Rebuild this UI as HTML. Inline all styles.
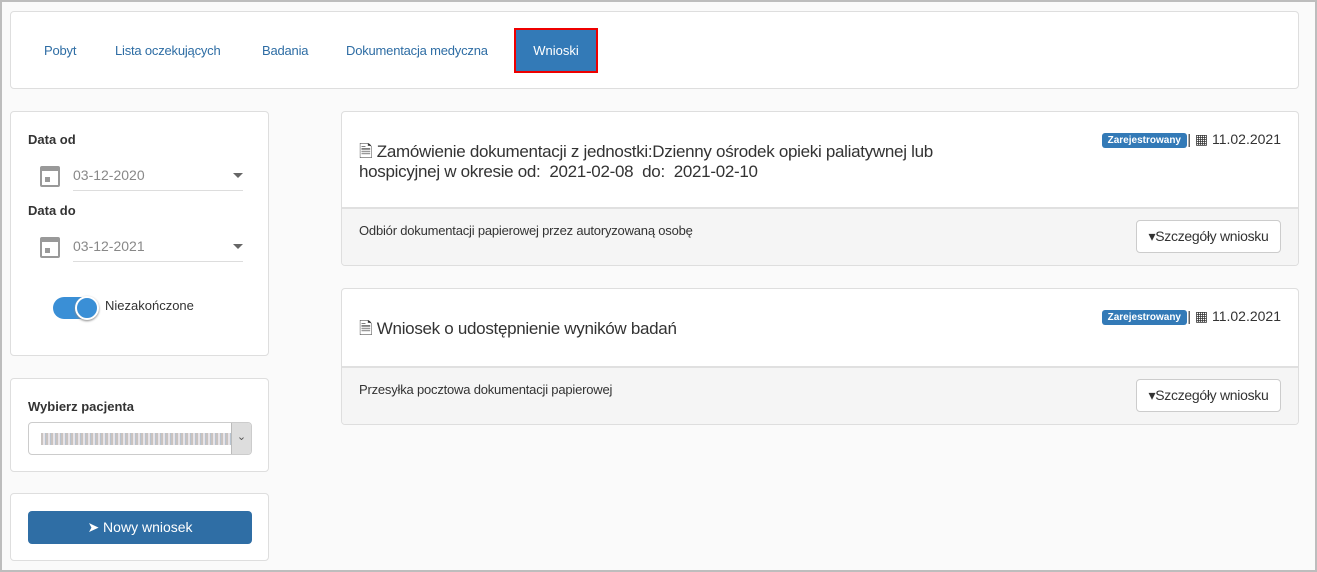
<!DOCTYPE html>
<html><head><meta charset="utf-8"><style>
*{box-sizing:border-box}
body{margin:0;width:1317px;height:572px;overflow:hidden;font-family:"Liberation Sans",sans-serif;background:#fafafa}
.frame{position:absolute;left:0;top:0;width:1317px;height:572px;border:2px solid #bdbdbd;border-bottom-width:2px}
.card{position:absolute;background:#fff;border:1px solid #dedede;border-radius:4px}
.nav a{position:absolute;top:31px;font-size:13px;color:#2e6da4;text-decoration:none;letter-spacing:-0.2px}
.lbl{position:absolute;font-size:13px;font-weight:bold;color:#333}
.date{position:absolute;left:72px;width:170px;border-bottom:1px solid #ddd;height:27px;padding-top:3px;font-size:14px;color:#888}
.date:after{content:"";position:absolute;right:0;top:9px;border:5px solid transparent;border-top-color:#666}
.cal{position:absolute;width:20px;height:21px;border:2.5px solid #999;border-top-width:5px;border-radius:2px}
.cal:after{content:"";position:absolute;left:3px;top:6px;width:5px;height:5px;background:#999}
.rc{position:absolute;left:341px;width:958px;background:#fff;border:1px solid #dedede;border-radius:4px;overflow:hidden}
.rc .foot{position:absolute;left:0;right:0;bottom:0;background:#f5f5f5;border-top:2px solid #e0e0e0}
.title{position:absolute;left:17px;font-size:17px;color:#333;line-height:20px;letter-spacing:-0.3px}
.badge{position:absolute;right:111px;font-size:10px;font-weight:bold;color:#fff;background:#337ab7;border-radius:3px;padding:2px 6px}
.dt{position:absolute;right:17px;font-size:14px;color:#333}
.btn{position:absolute;right:17px;width:145px;height:33px;border:1px solid #ccc;border-radius:4px;background:#fff;font-size:14px;color:#333;text-align:center;line-height:31px;letter-spacing:-0.3px}
.ft{position:absolute;left:17px;font-size:13px;color:#333;letter-spacing:-0.2px}
</style></head><body>
<div class="frame"></div>
<div class="card nav" style="left:10px;top:11px;width:1289px;height:78px">
<a style="left:33px">Pobyt</a><a style="left:104px">Lista oczekujących</a><a style="left:251px">Badania</a><a style="left:335px">Dokumentacja medyczna</a>
<div style="position:absolute;left:503px;top:16px;width:84px;height:45px;background:#337ab7;border:2px solid #e00;color:#fff;font-size:13px;text-align:center;line-height:41px">Wnioski</div>
</div>
<div class="card" style="left:10px;top:111px;width:259px;height:245px">
<div class="lbl" style="left:17px;top:20px">Data od</div>
<div class="cal" style="left:29px;top:54px"></div>
<div class="date" style="top:52px;left:62px">03-12-2020</div>
<div class="lbl" style="left:17px;top:91px">Data do</div>
<div class="cal" style="left:29px;top:125px"></div>
<div class="date" style="top:123px;left:62px">03-12-2021</div>
<div style="position:absolute;left:42px;top:185px;width:44px;height:22px;background:#3a8fd6;border-radius:11px"></div>
<div style="position:absolute;left:64px;top:184px;width:24px;height:24px;background:#3a8fd6;border:2px solid #fff;border-radius:50%;box-shadow:0 1px 2px #888"></div>
<div style="position:absolute;left:94px;top:186px;font-size:13px;color:#333">Niezakończone</div>
</div>
<div class="card" style="left:10px;top:378px;width:259px;height:94px">
<div class="lbl" style="left:17px;top:20px">Wybierz pacjenta</div>
<div style="position:absolute;left:17px;top:43px;width:224px;height:33px;border:1px solid #ccc;border-radius:4px;overflow:hidden">
<div style="position:absolute;left:12px;top:10px;width:190px;height:12px;background:repeating-linear-gradient(90deg,#c9c3c0 0 2px,#e8e4e8 2px 4px,#b8c4d0 4px 5px)"></div>
<div style="position:absolute;right:0;top:0;width:20px;height:31px;background:#ddd;border-left:1px solid #bbb;font-size:11px;color:#555;text-align:center;line-height:28px">&#8964;</div>
</div></div>
<div class="card" style="left:10px;top:493px;width:259px;height:68px">
<div style="position:absolute;left:17px;top:17px;width:224px;height:33px;background:#2f6ea5;border-radius:4px;color:#fff;font-size:14px;text-align:center;line-height:32px">&#10148; Nowy wniosek</div>
</div>
<div class="rc" style="top:111px;height:155px">
<div class="title" style="top:30px">&#128462; Zamówienie dokumentacji z jednostki:Dzienny ośrodek opieki paliatywnej lub<br>hospicyjnej w okresie od:&nbsp; 2021-02-08&nbsp; do:&nbsp; 2021-02-10</div>
<div class="badge" style="top:21px">Zarejestrowany</div><div class="dt" style="top:19px">| &#9638; 11.02.2021</div>
<div class="foot" style="height:58px"><div class="ft" style="top:14px">Odbiór dokumentacji papierowej przez autoryzowaną osobę</div><div class="btn" style="top:11px">&#9662;Szczegóły wniosku</div></div>
</div>
<div class="rc" style="top:288px;height:137px">
<div class="title" style="top:30px">&#128462; Wniosek o udostępnienie wyników badań</div>
<div class="badge" style="top:21px">Zarejestrowany</div><div class="dt" style="top:19px">| &#9638; 11.02.2021</div>
<div class="foot" style="height:58px"><div class="ft" style="top:14px">Przesyłka pocztowa dokumentacji papierowej</div><div class="btn" style="top:11px">&#9662;Szczegóły wniosku</div></div>
</div>
</body></html>
